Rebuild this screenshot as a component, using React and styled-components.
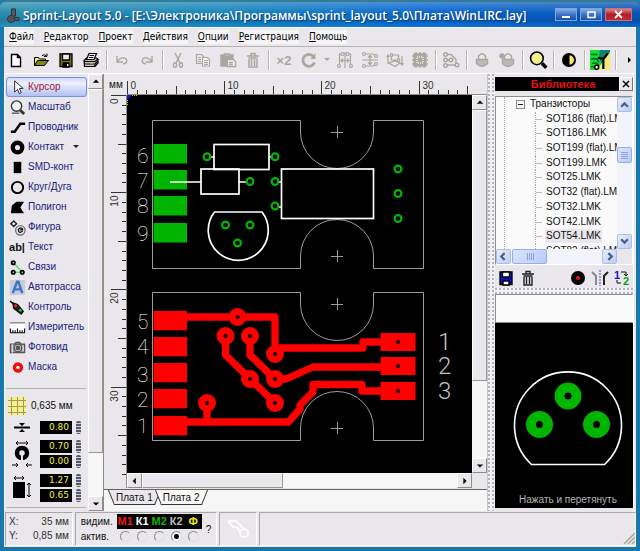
import React, { useState } from 'react';
import styled, { createGlobalStyle, css } from 'styled-components';

const face = '#e9e7ec';
const sans = '"Liberation Sans", Arial, sans-serif';
const ui = '"DejaVu Sans Condensed", "DejaVu Sans", sans-serif';
const dither = css`
  background: repeating-conic-gradient(#f1f1f4 0 25%, #fbfbfb 0 50%) 0 0 / 2px 2px;
`;
const dots = css`
  background: radial-gradient(circle at 1px 1px, #b4b4c0 1px, transparent 1px) 0 0 / 4px 4px #f1f1f5;
`;

const Global = createGlobalStyle`
  * { box-sizing: border-box; }
  body { margin: 0; background: #1b7fb0; font-family: ${sans}; font-size: 10px; color: #111; }
  button, input { font: inherit; color: inherit; margin: 0; padding: 0; }
  button { border: 0; background: none; }
  svg { display: block; flex: none; }
`;

const Window = styled.div`
  height: 100vh;
  min-height: 551px;
  display: flex;
  flex-direction: column;
  padding: 0 4px 4px;
  background: #1878ac;
  border-radius: 6px 6px 0 0;
`;

const TitleBar = styled.header`
  flex: 0 0 27px;
  margin: 0 -4px;
  padding: 3px 8px 0 6px;
  display: flex;
  align-items: center;
  gap: 3px;
  border-radius: 6px 6px 0 0;
  border-top: 2px solid #367b93;
  background: linear-gradient(#ffffff40, #ffffff00 45%, #00308030 75%, #20a0ff40),
    linear-gradient(90deg, #2b8eae, #1685bb 35%, #0868d0 65%, #0655b4);
`;

const Title = styled.h1`
  flex: 1;
  margin: 0;
  font: 600 12px/18px "Open Sans", sans-serif;
  color: #fff;
  text-shadow: 1px 1px 1px #0a3a70;
  white-space: nowrap;
`;

const WindowButtons = styled.div`
  display: flex;
  gap: 3px;
  margin-top: -3px;
`;

const WindowButton = styled.button`
  width: ${(p) => (p.$close ? 27 : 22)}px;
  height: 13px;
  display: grid;
  place-items: center;
  border: 1px solid ${(p) => (p.$close ? '#c87080' : '#7fa5dc')};
  background: ${(p) => (p.$close ? 'linear-gradient(#d58a90, #b51c24 50%, #c82a30)' : 'linear-gradient(#87aee6, #3f74c8 50%, #1c4ea8)')};
`;

const MenuBar = styled.nav`
  flex: 0 0 19px;
  display: flex;
  align-items: center;
  gap: 10px;
  padding-left: 5px;
  background: ${face};
  border-top: 1px solid #f8f8fa;
`;

const MenuItem = styled.button`
  font: 10px/14px ${ui};
  color: #000;
  background: #f5f5f7;
  white-space: nowrap;
`;

const ToolBar = styled.div`
  flex: 0 0 28px;
  display: flex;
  align-items: center;
  gap: 1px;
  background: ${face};
  border-top: 1px solid #b9b6ae;
  border-bottom: 1px solid #fff;
  color: #aaa79f;
`;

const ToolButton = styled.button`
  width: ${(p) => p.$w || 24}px;
  height: 24px;
  display: grid;
  place-items: center;
  font: bold 13px ${sans};
`;

const Divider = styled.span`
  width: 5px;
  height: 20px;
  background: linear-gradient(90deg, transparent 2px, #b9b6ae 2px 3px, #fff 3px 4px, transparent 4px);
`;

const Spacer = styled.span`
  flex: 1;
`;

const Body = styled.main`
  flex: 1;
  min-height: 0;
  display: grid;
  grid-template-columns: 84px 15px minmax(0, 1fr) 8px 139px 2px;
  background: ${face};
`;

const SidePanel = styled.section`
  display: flex;
  flex-direction: column;
  padding: 3px 0 0 1px;
  border-left: 1px solid #f8f8fa;
`;

const ToolRow = styled.button`
  height: 20px;
  display: grid;
  grid-template-columns: 20px auto 1fr;
  gap: 1px;
  align-items: center;
  justify-items: start;
  margin-right: 1px;
  border: 1px solid transparent;
  border-radius: 3px;
  color: #20207c;
  font: 10px/14px ${sans};
  white-space: nowrap;
  ${(p) => p.$on && css`
    color: #a01828;
    border-color: #7893e0;
    background: linear-gradient(#cfd8fa, #eef0fc 30%, #b3c0f6);
  `}
  > svg:first-child { justify-self: center; }
  > svg:nth-of-type(2) { justify-self: center; }
`;

const Settings = styled.div`
  margin: 11px 2px 0 0;
  border-top: 1px solid #b9b6ae;
  border-bottom: 1px solid #b9b6ae;
  height: 120px;
  flex: none;
  padding: 7px 0 0 2px;
`;

const GridStep = styled.button`
  display: flex;
  align-items: center;
  gap: 5px;
  height: 19px;
  white-space: nowrap;
`;

const Measures = styled.div`
  display: grid;
  grid-template-columns: 28px 32px 5px;
  column-gap: 4px;
  margin-top: 6px;
  align-items: center;
  justify-items: center;
`;

const Fields = styled.div`
  display: flex;
  flex-direction: column;
  gap: 2px;
`;

const NumberField = styled.input`
  width: 32px;
  height: 13px;
  border: 0;
  text-align: right;
  padding-right: 3px;
  background: #000;
  color: #f3f32c;
  font: 9px/13px "DejaVu Sans", sans-serif;
`;

const Spinner = styled.button`
  width: 5px;
  height: 13px;
  border-radius: 2px;
  background: repeating-linear-gradient(#55586a 0 2px, #d0d0da 2px 3px);
`;

const ScrollBar = styled.div`
  display: flex;
  flex-direction: ${(p) => (p.$row ? 'row' : 'column')};
  ${dither}
`;

const Arrow = styled.button`
  flex: 0 0 15px;
  min-width: 15px;
  min-height: 15px;
  display: grid;
  place-items: center;
  background: ${face};
  border: 1px solid;
  border-color: #fff #8f8d84 #8f8d84 #fff;
`;

const Thumb = styled.div`
  flex: ${(p) => p.$size} 1 0;
  background: ${face};
  border: 1px solid;
  border-color: #fff #99978e #99978e #fff;
`;

const Track = styled.div`
  flex: ${(p) => p.$size} 1 0;
`;

const Editor = styled.section`
  display: grid;
  grid-template-columns: 23px minmax(0, 1fr) 15px;
  grid-template-rows: 21px minmax(0, 1fr) 15px 23px;
  border-left: 1px solid #8f8d84;
`;

const Unit = styled.span`
  font: 10px/22px ${sans};
  padding-left: 5px;
`;

const RulerTop = styled.svg`
  width: 100%;
  height: 21px;
  grid-column: 2 / 4;
  border-bottom: 1px solid #8f8d84;
`;

const RulerLeft = styled.svg`
  width: 23px;
  height: 100%;
  min-height: 0;
  grid-row: 2 / 4;
  border-right: 1px solid #8f8d84;
`;

const Board = styled.svg`
  width: 100%;
  height: 100%;
  min-height: 0;
  background: #000;
`;

const Corner = styled.span`
  background: ${face};
`;

const Tabs = styled.div`
  grid-column: 1 / -1;
  display: flex;
  align-items: flex-start;
  padding: 1px 0 0 7px;
  margin-top: 1px;
  border-top: 1px solid #66645e;
  ${dither}
`;

const Tab = styled.button`
  position: relative;
  z-index: 0;
  height: 15px;
  padding: 0 5px;
  margin: -1px 0 0 0;
  font: 10px/14px ${sans};
  white-space: nowrap;
  &::before, &::after {
    content: '';
    position: absolute;
    z-index: -1;
    top: 0;
    bottom: 0;
    background: ${(p) => (p.$on ? face : '#fafafa')};
    border-bottom: 1px solid #333;
  }
  &::before { left: 0; right: 6px; border-left: 1px solid #333; transform: skewX(22deg); }
  &::after { left: 6px; right: 0; border-right: 1px solid #333; transform: skewX(-22deg); }
`;

const Splitter = styled.div`
  ${dots}
  border-left: 1px solid #c8c6c6;
`;

const Library = styled.aside`
  display: flex;
  flex-direction: column;
  padding-top: 3px;
  border-right: 1px solid #fff;
`;

const LibraryHead = styled.div`
  display: flex;
  height: 14px;
  background: #000;
`;

const LibraryTitle = styled.h2`
  flex: 1;
  margin: 0;
  padding-left: 12px;
  text-align: center;
  color: #e01212;
  font: bold 11px/14px ${sans};
`;

const CloseButton = styled.button`
  width: 14px;
  display: grid;
  place-items: center;
  background: ${face};
  border: 1px solid;
  border-color: #fff #777 #777 #fff;
`;

const TreeBox = styled.div`
  flex: 0 0 169px;
  margin-top: 5px;
  display: grid;
  grid-template-columns: minmax(0, 1fr) 15px;
  grid-template-rows: minmax(0, 1fr) 15px;
  background: #fafafa;
  border: 1px solid #8f8d84;
  border-right-color: #fff;
  border-bottom-color: #fff;
`;

const Tree = styled.ul`
  margin: 0 0 0 8px;
  padding: 0;
  list-style: none;
  overflow: hidden;
  display: grid;
  grid-template-rows: repeat(10, minmax(0, 1fr)) 5px;
  border-left: 1px dotted #aaa;
`;

const Group = styled.li`
  display: flex;
  align-items: center;
  gap: 5px;
  padding-left: 11px;
  font: 10px/14px ${sans};
  white-space: nowrap;
`;

const Toggle = styled.button`
  width: 9px;
  height: 9px;
  border: 1px solid #8a8a94;
  background: linear-gradient(transparent 3px, #222 3px 4px, transparent 4px) 1px 0 / 5px 7px no-repeat;
`;

const Leaf = styled.li`
  margin-left: 30px;
  padding-left: 9px;
  white-space: nowrap;
  border-left: 1px dotted #aaa;
  background: linear-gradient(#bbb, #bbb) 0 7px / 6px 1px no-repeat;
`;

const LeafName = styled.span`
  font: 10px/14px ${sans};
  display: inline-block;
  padding: 0 1px;
  background: ${(p) => (p.$on ? '#e9e7ec' : 'transparent')};
`;

const XpBar = styled.div`
  display: flex;
  flex-direction: ${(p) => (p.$row ? 'row' : 'column')};
  background: #f3f3fb;
`;

const XpArrow = styled.button`
  flex: 0 0 15px;
  min-width: 15px;
  display: grid;
  place-items: center;
  border: 1px solid #aebfe0;
  border-radius: 2px;
  background: linear-gradient(135deg, #e6edfd, #bccdf6);
`;

const XpThumb = styled.div`
  flex: 0 0 ${(p) => p.$size}px;
  display: grid;
  place-items: center;
  border: 1px solid #98aee6;
  border-radius: 2px;
  background: linear-gradient(135deg, #dbe5fd, #b9caf8);
`;

const LibraryTools = styled.div`
  flex: 0 0 23px;
  display: flex;
  align-items: center;
  gap: 2px;
  padding: 2px 1px 0;
`;

const SmallButton = styled.button`
  width: 20px;
  height: 18px;
  display: grid;
  place-items: center;
`;

const HSplitter = styled.div`
  flex: 0 0 6px;
  ${dots}
`;

const Filter = styled.input`
  flex: 0 0 29px;
  width: 100%;
  border: 1px solid;
  border-color: #8f8d84 #fff #8f8d84 #8f8d84;
  background: #fafafa;
`;

const Preview = styled.div`
  flex: 1;
  min-height: 0;
  margin-bottom: 3px;
  padding-left: 8px;
  background: #000;
  display: flex;
  flex-direction: column;
  align-items: center;
  justify-content: flex-end;
`;

const Hint = styled.p`
  margin: 27px 0 1px;
  font: 10px/14px ${sans};
  color: #b4b4b4;
  white-space: nowrap;
`;

const StatusBar = styled.footer`
  flex: 0 0 35px;
  display: flex;
  gap: 2px;
  background: ${face};
  padding: 1px 0 1px 1px;
`;

const StatusPanel = styled.div`
  flex: ${(p) => (p.$w ? `0 0 ${p.$w}px` : '1')};
  border: 1px solid;
  border-color: #a9a7a0 #fff #fff #a9a7a0;
  display: flex;
  align-items: center;
  justify-content: ${(p) => (p.$end ? 'flex-end' : 'center')};
  gap: 4px;
`;

const Coords = styled.dl`
  flex: 1;
  margin: 0;
  padding: 0 3px;
  display: grid;
  grid-template-columns: auto 1fr;
  line-height: 14px;
  color: #333;
  dt, dd { margin: 0; }
  dd { text-align: right; }
`;

const Layers = styled.fieldset`
  border: 0;
  margin: 0;
  padding: 0;
  display: grid;
  grid-template-columns: 36px repeat(5, 17px);
  grid-template-rows: 15px 15px;
  align-items: center;
  font: 10px/14px ${sans};
`;

const LayerName = styled.label`
  height: 15px;
  text-align: center;
  background: #000;
  color: ${(p) => p.$c};
  font: bold 11px/15px ${sans};
`;

const Radio = styled.input`
  appearance: none;
  width: 11px;
  height: 11px;
  margin: 0;
  justify-self: center;
  border-radius: 50%;
  border: 1px solid #8d8b86;
  border-right-color: #dedee2;
  border-bottom-color: #dedee2;
  background: ${face};
  &:checked { background: radial-gradient(circle, #000 2px, #f6f6f6 3px); }
`;

const Tri = ({ d = 'up' }) => {
  const pts = { up: '0,5 4,1 8,5', down: '0,2 8,2 4,6', left: '5,0 1,4 5,8', right: '2,0 6,4 2,8' };
  return <svg width="8" height="8" viewBox="-1 -1 10 10"><polygon points={pts[d]} fill="#000" /></svg>;
};

const Chevron = ({ d }) => {
  const p = { up: 'M1 6 4 3 7 6', down: 'M1 2 4 5 7 2', left: 'M5 1 2 4 5 7', right: 'M3 1 6 4 3 7' };
  return <svg width="9" height="9" viewBox="0 0 8 8"><path d={p[d]} fill="none" stroke="#4d6185" strokeWidth="2" /></svg>;
};

const Grip = ({ turn }) => (
  <svg width="8" height="8" shapeRendering="crispEdges"><path d={turn ? 'M1 0V7M3 0V7M5 0V7M7 0V7' : 'M0 1H7M0 3H7M0 5H7M0 7H7'} stroke="#8ca2dc" /></svg>
);

const Icon = ({ size = 18, children, ...rest }) => (
  <svg width={size} height={size} viewBox="0 0 18 18" fill="none" stroke="currentColor" strokeWidth="1.4" {...rest}>{children}</svg>
);

const dot = (x, y, r = 1.5, f = face) => <circle key={`${x}-${y}`} cx={x} cy={y} r={r} fill={f} />;

const icons = {
  new: <Icon stroke="#000"><path d="M4.500 3.500h6l3 3v9h-9zM10.500 3.500v3h3" fill="#fff" /></Icon>,
  open: <Icon stroke="#000" strokeWidth="1"><path d="M2.500 14.500v-8h4l1 1.500h6v2" fill="#f1e668" /><path d="M2.500 14.500l3-5h11l-4 5z" fill="#858516" /><path d="M10 4.500q3-2 5 1m0-3v3h-3" /></Icon>,
  save: <Icon stroke="#000" strokeWidth="1.300"><path d="M3 3h12v12.500H3z" fill="#77770d" /><path d="M5.500 3h7v6h-7z" fill="#eceaf0" /><path d="M6 12h6v4H6z" fill="#000" /><path d="M10.700 13v2" stroke="#fff" /></Icon>,
  print: <Icon stroke="#000" strokeWidth="1.200"><path d="M2 9.500 4.500 7h10l1.500 1v4l-3 3.500H2.500z" fill="#c4c4c8" /><path d="M4.500 8.500 7 2.500h7.500l-2.500 6z" fill="#fff" /><path d="M7.500 4.500h4.500M6.800 6.500h4.500M2 10.500h11l3-2.500M2.500 13h10.500v2M13 13l3-3" /><path d="M8 12h3" stroke="#d8c820" /></Icon>,
  undo: <Icon><path d="M4 5v6h6M4 11q3-5 8-4 3 2 1 5l-3 1" /></Icon>,
  redo: <Icon><path d="M14 5v6H8M14 11q-3-5-8-4-3 2-1 5l3 1" /></Icon>,
  cut: <Icon><path d="M6 2l5 10M12 2 7 12" /><ellipse cx="6" cy="14" rx="1.600" ry="2.300" /><ellipse cx="12" cy="14" rx="1.600" ry="2.300" /></Icon>,
  copy: <Icon strokeWidth="1.200"><path d="M2.500 3.500h5l2 2v7h-7zM4 6.500h3M4 8.500h3M4 10.500h3" /><path d="M8.500 6.500h5l2 2v6.500h-7z" fill="#f4f3f6" /><path d="M10 9.500h4M10 11.500h4M10 13.300h4" /></Icon>,
  paste: <Icon><path d="M2 4h12v11H2z" fill="currentColor" /><path d="M5.500 3h5v2h-5z" fill="#eee" /><path d="M8.500 8.500h6l2 2v5h-8z" fill="#f4f3f6" /><path d="M10 11.500h4M10 13.500h4" /></Icon>,
  trash: <Icon strokeWidth="1.500"><path d="M3 5h12M7 4.500V2.500h4v2M4.500 7h9M5 8v8h8V8M7.500 8v7M10.500 8v7" /></Icon>,
  rotate: <Icon strokeWidth="2.800"><path d="M14.500 11.500a6 6 0 1 1-1-6" /><path d="M15.500 2v6h-5z" fill="currentColor" stroke="none" /></Icon>,
  mirrorH: <Icon strokeWidth="1.200"><path d="M9 1v16M6.500 3H3.500v12M14.500 15V3h-3M5 9.500h8M7 7.500l-2 2 2 2M11 7.500l2 2-2 2" />{[[3, 15], [6.500, 3], [15, 15], [11.500, 3]].map(([x, y]) => dot(x, y))}</Icon>,
  mirrorV: <Icon strokeWidth="1.200"><path d="M1 9h16M4 3h8l3 2M4 15h8l3-2M9 5v8M7 6.500l2-2 2 2M7 11.500l2 2 2-2" />{[[3, 3], [15, 5], [3, 15], [15, 13]].map(([x, y]) => dot(x, y))}</Icon>,
  snap: <Icon strokeWidth="1.200"><path d="M5.500 4h7v5h-7zM2 13V4M.5 6 2 4l1.500 2M16 5v9M14.500 12l1.500 2 1.500-2M3 12l6 3.500 5-3.500-5-2z" />{[[5.500, 4], [12.500, 9]].map(([x, y]) => dot(x, y, 1.300))}</Icon>,
  chip: <Icon><path d="M3 3h12v12H3z" fill="currentColor" /><path d="M1 5h16M1 9h16M1 13h16M5 1v16M9 1v16M13 1v16" strokeDasharray="2 1" /><path d="M6 6h6v6H6z" stroke="#f2f1f5" strokeDasharray="1 1" /></Icon>,
  nodes: <Icon><path d="M4 3.500h5l5 5v5.500H4M4 9h5" />{[[3.500, 3.500], [3.500, 9], [3.500, 14.500], [15, 14], [9, 9]].map(([x, y]) => dot(x, y, 1.800))}</Icon>,
  lock: <Icon><path d="M5.500 8V5q3.500-4.500 7 0v3" /><path d="M3.500 8.500h11v4q-5.500 6-11 0z" fill="#f0eff3" /><path d="M4 10h10M4 12h10M6 14h6" /></Icon>,
  lockAdd: <Icon><path d="M6.500 8V5q3.500-4.500 7 0v3" /><path d="M4.500 8.500h11v4q-5.500 6-11 0z" fill="#f0eff3" /><path d="M5 10h10M5 12h10M7 14h6M4 2v6M1 5h6M2 3l4 4M6 3 2 7" /></Icon>,
  search: <Icon size={20} stroke="#000"><circle cx="8" cy="7.500" r="5.700" fill="#f6f08a" /><path d="m12.500 12 4 4" strokeWidth="3.200" /></Icon>,
  contrast: <Icon stroke="none"><circle cx="9" cy="9" r="7" fill="#000" /><path d="M9.500 4.500a4.500 4.500 0 0 1 0 9zM10 4l4.500 5-4.500 5z" fill="#f3e77c" /></Icon>,
  board: <Icon size={20} stroke="none"><path d="M0 0h18v18H0z" fill="#0c8079" /><path d="M0 0h9l-1 7 2 4-1 7H0z" fill="#19dc32" /><path d="M1 4h6M1 8h5l2 3M2 12h4l2 2M1 15h4" stroke="#056d2a" /><path d="M18 2v16H6z" fill="#f4eb78" /><path d="m16 3-4 5-5-1M12 8v9" stroke="#000" strokeWidth="2" /><circle cx="6" cy="15.500" r="1.800" fill="#fff" stroke="#000" /></Icon>,
};

const toolIcons = {
  cursor: <Icon stroke="#222" strokeWidth="1"><path d="M6 2v12l3-3 2 4.500 2-1L11 10h4z" fill="#fff" /></Icon>,
  zoom: <Icon stroke="#333"><circle cx="8" cy="7.500" r="5.500" fill="#eef3f5" /><path d="m12 12 4 4" strokeWidth="3" /><path d="M5 6l2-2" stroke="#fff" /><path d="M3 15h8" stroke="#555" /></Icon>,
  track: <Icon stroke="#000" strokeWidth="2.600"><path d="M2 13.500h4L12 5h5" /></Icon>,
  pad: <Icon stroke="#000" strokeWidth="4.600"><circle cx="9" cy="9" r="5" /></Icon>,
  smd: <Icon stroke="none"><path d="M5 3h8v12H5z" fill="#000" /></Icon>,
  circle: <Icon stroke="#000" strokeWidth="2"><circle cx="9" cy="9" r="6" /></Icon>,
  polygon: <Icon stroke="none"><path d="M2 15 3 7l5-4h8l-4 6 4 6z" fill="#000" /></Icon>,
  shape: <Icon stroke="#222" strokeWidth="1.500"><path d="m5 2 3 3-3 3-3-3z" /><circle cx="12" cy="12" r="5" stroke="#777" /><path d="M12 12q2-3 2 1-4 3-4-2 2-3 5 0" /></Icon>,
  links: <Icon stroke="#000" strokeWidth="2"><path d="M5 4l9 10H5" stroke="#31dc43" strokeWidth="1.200" /><circle cx="4.500" cy="4" r="1.700" fill="#fff" /><circle cx="4.500" cy="14" r="1.700" fill="#fff" /><circle cx="14" cy="14" r="1.700" fill="#fff" /></Icon>,
  auto: <Icon><path d="M1 1h16v16H1z" fill="#c9ccd0" stroke="none" /><path d="m4 15 4.500-12h1.500L14 15M6 11h7" stroke="#3c74d8" strokeWidth="2.600" /></Icon>,
  test: <Icon><path d="M1 2 15 14" stroke="#000" /><path d="m4 4 5 2 6 7-2 3-8-6z" fill="#222" stroke="#111" /><path d="m6 6 2 2" stroke="#f22" strokeWidth="2.500" /><path d="m11 11 2 2" stroke="#1c3" strokeWidth="2.500" /></Icon>,
  measure: <Icon><path d="M1 5h16v9H1z" fill="#fff" stroke="none" /><path d="M1 4h16" stroke="#888" /><path d="M1.500 10v4M4 12v2M6.500 12v2M9 10v4M11.500 12v2M14 12v2M16.500 10v4M1 14.500h16" stroke="#111" strokeWidth="1.200" /></Icon>,
  photo: <Icon stroke="#555"><path d="M1.500 5.500h4l2-2h4l1 2h4v9h-15z" fill="#98969a" /><circle cx="9.500" cy="9.500" r="4" fill="#cfc9bd" /><circle cx="9.500" cy="9.500" r="1.800" fill="#556" /><path d="M3.500 5.500v9M15 7v6" stroke="#ddd" /></Icon>,
  mask: <Icon stroke="#f50c0c" strokeWidth="3.600"><circle cx="9.500" cy="9" r="3.700" fill="#fff" /></Icon>,
};

const tools = [
  ['cursor', 'Курсор'], ['zoom', 'Масштаб'], ['track', 'Проводник'], ['pad', 'Контакт'], ['smd', 'SMD-конт'],
  ['circle', 'Круг/Дуга'], ['polygon', 'Полигон'], ['shape', 'Фигура'], ['text', 'Текст'], ['links', 'Связи'],
  ['auto', 'Автотрасса'], ['test', 'Контроль'], ['measure', 'Измеритель'], ['photo', 'Фотовид'], ['mask', 'Маска'],
];

const Glyph = styled.span`
  justify-self: center;
  font: bold 11px/14px ${sans};
  color: #111;
`;

const toolbar = ['new', 'open', 'save', 'print', '|', 'undo', 'redo', '|', 'cut', 'copy', 'paste', 'trash', '|', 'x2', 'rotate', 'more',
  'mirrorH', 'mirrorV', 'snap', 'chip', '|', 'nodes', '|', 'lock', 'lockAdd', '|', 'search', '|', 'contrast', '|', 'board', '|'];

const menus = ['Файл', 'Редактор', 'Проект', 'Действия', 'Опции', 'Регистрация', 'Помощь'];
const parts = ['SOT186 (flat).LMK', 'SOT186.LMK', 'SOT199 (flat).LMK', 'SOT199.LMK', 'SOT25.LMK', 'SOT32 (flat).LMK', 'SOT32.LMK', 'SOT42.LMK', 'SOT54.LMK', 'SOT82 (flat).LMK'];
const layers = [['М1', '#f01818'], ['К1', '#fff'], ['М2', '#14b014'], ['К2', '#bdbdbd'], ['Ф', '#f0e818']];

const STEP = 9.72;
const tick = (i) => Math.round(i * STEP) + 0.5;

function HorizontalRuler() {
  return (
    <RulerTop fontFamily="Liberation Sans" fontSize="10" fill="#333">
      {Array.from({ length: 36 }, (_, i) => (
        <React.Fragment key={i}>
          <path d={`M${tick(i)} ${i % 10 === 0 ? 7 : i % 5 === 0 ? 12 : 16}V20`} stroke="#333" />
          {i % 10 === 0 && <text x={tick(i) + 3} y="15">{i}</text>}
        </React.Fragment>
      ))}
    </RulerTop>
  );
}

function VerticalRuler() {
  return (
    <RulerLeft fontFamily="Liberation Sans" fontSize="10" fill="#333">
      {Array.from({ length: 40 }, (_, i) => (
        <React.Fragment key={i}>
          <path d={`M${i % 10 === 0 ? 7 : i % 5 === 0 ? 14 : 18} ${tick(i)}H22`} stroke="#333" />
          {i % 10 === 0 && <text transform={`translate(14 ${tick(i) + 3}) rotate(-90)`} textAnchor="end">{i}</text>}
        </React.Fragment>
      ))}
    </RulerLeft>
  );
}

const outline = 'M152.500 120.500H300.500V132A36.500 36.500 0 0 0 373.500 132V120.500H423.500V268.500H373.500V256A36.500 36.500 0 0 0 300.500 256V268.500H152.500ZM331 132.500h12M337.500 126v12M331 256.500h12M337.500 250v12';
const holes = [[207, 156.700], [275, 156.700], [250, 181.500], [275, 181.500], [275, 206], [225.500, 225], [250, 225], [237.500, 243], [398, 169], [398, 193.500], [398, 218.500]];
const redPads = [[237.500, 317], [225.500, 336], [250, 336], [275, 354], [250, 379], [275, 379], [275, 403], [207, 403]];
const greenRows = [[144, '6', 163], [170, '7', 188], [196, '8', 213], [223, '9', 241]];
const redRows = [[311, '5', 329], [337, '4', 354], [363, '3', 382], [389, '2', 407], [416, '1', 433]];
const exits = [[333, '1', 350], [357, '2', 374], [382, '3', 399]];

function Circuit() {
  return (
    <Board fill="none">
      <path d="M0 0h5L0 5z" fill="#0018f0" />
      <path d="M5 .5h6M.5 5v6" stroke="#c8c820" strokeDasharray="1 1" />
      <g transform="translate(-127 -95)" fontFamily="Roboto" fontWeight="100" fontSize="21">
        <path d={outline} stroke="#9c9c9c" />
        <path d={outline} stroke="#9c9c9c" transform="translate(0 172)" />
        {greenRows.map(([y, n, b]) => (
          <g key={n}><rect x="153.500" y={y} width="33.500" height="19.500" fill="#00b400" /><text x="137" y={b} fill="#fff">{n}</text></g>
        ))}
        <g stroke="#fff" strokeWidth="1.700">
          <path d="M170 182h31M239 182h8M209 157h5M269 157h4M277 182h4M277 207h4" />
          <rect x="214" y="144.500" width="55" height="25" />
          <rect x="201" y="169" width="38" height="25" />
          <rect x="281.500" y="169" width="92" height="49.500" />
          <path d="M214.500 212H262A30 30 0 1 1 214.500 212Z" />
        </g>
        <g stroke="#00b400" strokeWidth="2.200">
          {holes.map(([x, y]) => <circle key={`${x}${y}`} cx={x} cy={y} r="3.400" />)}
        </g>
        <g stroke="#fe0000" strokeWidth="7.300" strokeLinejoin="round">
          <path d="M187 317H275V348H363V342H382M225.500 336V355L275 403M250 336V355L275 379H286L313 367H382M187 422H288.500L300 409V405L313 392V384.500H362V391H382M207 403V422" />
        </g>
        {redRows.map(([y, n, b]) => (
          <g key={n}><rect x="153.500" y={y} width="33.500" height="19.300" fill="#fe0000" /><text x="137" y={b} fill="#fff">{n}</text></g>
        ))}
        {redPads.map(([x, y]) => <circle key={`${x}${y}`} cx={x} cy={y} r="5.500" stroke="#fe0000" strokeWidth="7" fill="#000" />)}
        {exits.map(([y, n, b]) => (
          <g key={n}>
            <rect x="380.500" y={y} width="35" height="18" fill="#fe0000" />
            <circle cx="398" cy={y + 9} r="2" fill="#000" />
            <text x="438" y={b} fontSize="24" fontWeight="300" fill="#c4c4c4">{n}</text>
          </g>
        ))}
      </g>
    </Board>
  );
}

function Sidebar() {
  const [active, setActive] = useState('cursor');
  return (
    <SidePanel aria-label="Инструменты">
      {tools.map(([id, name]) => (
        <ToolRow key={id} $on={active === id} onClick={() => setActive(id)}>
          {toolIcons[id] ? React.cloneElement(toolIcons[id], { size: 17 }) : <Glyph>ab|</Glyph>}
          <span>{name}</span>
          {id === 'pad' && <svg width="6" height="4"><path d="M0 0h6L3 3z" fill="#222" /></svg>}
        </ToolRow>
      ))}
      <Settings>
        <GridStep>
          <svg width="18" height="18"><path d="M0 0h18v18H0z" fill="#f6f08a" /><path d="M3.500 0v18M9.500 0v18M15.500 0v18M0 3.500h18M0 9.500h18M0 15.500h18" stroke="#a09a58" /></svg>
          0,635 мм
        </GridStep>
        <Measures>
          <svg width="18" height="13" fill="#000"><path d="M1 5.500h16v2H1zM6 2h6L9 5zM6 11h6L9 8z" /></svg>
          <NumberField aria-label="Ширина проводника" defaultValue="0.80" />
          <Spinner aria-label="Изменить ширину" />
        </Measures>
        <Measures>
          <svg width="20" height="28"><path d="M4 3h12M6 1 4 3l2 2M14 1l2 2-2 2" stroke="#000" fill="none" /><circle cx="10" cy="13" r="5" fill="none" stroke="#000" strokeWidth="4.500" /><path d="M10 13v12" stroke={face} strokeWidth="2" /><path d="M0 25h6M4 23l2 2-2 2M20 25h-6M16 23l-2 2 2 2" stroke="#000" fill="none" /></svg>
          <Fields>
            <NumberField aria-label="Диаметр контакта" defaultValue="0.70" />
            <NumberField aria-label="Диаметр отверстия" defaultValue="0.00" />
          </Fields>
          <Fields><Spinner aria-label="Изменить контакт" /><Spinner aria-label="Изменить отверстие" /></Fields>
        </Measures>
        <Measures>
          <svg width="20" height="26"><path d="M2 3h10M4 1 2 3l2 2M10 1l2 2-2 2M17 8v14M15 10l2-2 2 2M15 20l2 2 2-2" stroke="#000" fill="none" /><path d="M1 7h12v16H1z" /></svg>
          <Fields>
            <NumberField aria-label="Ширина SMD" defaultValue="1.27" />
            <NumberField aria-label="Высота SMD" defaultValue="0.65" />
          </Fields>
          <Fields><Spinner aria-label="Изменить ширину SMD" /><Spinner aria-label="Изменить высоту SMD" /></Fields>
        </Measures>
      </Settings>
    </SidePanel>
  );
}

function LibraryPanel() {
  return (
    <Library>
      <LibraryHead>
        <LibraryTitle>Библиотека</LibraryTitle>
        <CloseButton aria-label="Закрыть"><svg width="8" height="8"><path d="M1 1l6 6M7 1 1 7" stroke="#000" strokeWidth="1.500" /></svg></CloseButton>
      </LibraryHead>
      <TreeBox>
        <Tree>
          <Group><Toggle aria-label="Свернуть" />Транзисторы</Group>
          {parts.map((p) => <Leaf key={p}><LeafName $on={p === 'SOT54.LMK'}>{p}</LeafName></Leaf>)}
        </Tree>
        <XpBar>
          <XpArrow aria-label="Вверх"><Chevron d="up" /></XpArrow>
          <Track $size={35} />
          <XpThumb $size={16}><Grip /></XpThumb>
          <Track $size={70} />
          <XpArrow aria-label="Вниз"><Chevron d="down" /></XpArrow>
        </XpBar>
        <XpBar $row>
          <XpArrow aria-label="Влево"><Chevron d="left" /></XpArrow>
          <Track $size={1} />
          <XpThumb $size={35}><Grip turn /></XpThumb>
          <Track $size={54} />
          <XpArrow aria-label="Вправо"><Chevron d="right" /></XpArrow>
        </XpBar>
        <Corner />
      </TreeBox>
      <LibraryTools>
        <SmallButton aria-label="Сохранить"><Icon stroke="#000"><path d="M3 3h12v12.500H3z" fill="#1010c0" /><path d="M5.500 3h7v5h-7z" fill="#fff" /><path d="M6 12h6v4H6z" fill="#fff" /></Icon></SmallButton>
        <SmallButton aria-label="Удалить"><Icon stroke="#222"><path d="M3 5h12M7 4.500V2.500h4v2M4.500 7h9M5 8v8h8V8M7.500 8v7M10.500 8v7" /></Icon></SmallButton>
        <Spacer />
        <SmallButton aria-label="Сторона"><Icon stroke="none"><circle cx="9" cy="9" r="7" fill="#000" /><circle cx="9" cy="9" r="2" fill="#f01010" /></Icon></SmallButton>
        <SmallButton aria-label="Отразить"><Icon stroke="#222" strokeWidth="2"><path d="M1 3l4 4v9" stroke="#889" /><path d="M17 3l-4 4v9" /><path d="M9 1v16" stroke="#3a4ae0" strokeWidth="1" strokeDasharray="2 1" /></Icon></SmallButton>
        <SmallButton aria-label="Нумерация"><svg width="16" height="18" fontFamily="Liberation Sans" fontWeight="bold" fontSize="11"><text x="0" y="10" fill="#1414d0">1</text><text x="9" y="16" fill="#0a9c28">2</text><path d="M7 3h5v4M10 5l2 2 2-2M7 14H3v-3" stroke="#111" fill="none" /></svg></SmallButton>
      </LibraryTools>
      <HSplitter />
      <Filter aria-label="Описание" />
      <Preview>
        <svg width="110" height="96">
          <path d="M18.500 94.500A53.500 53.500 0 1 1 91.500 94.500Z" fill="none" stroke="#fff" strokeWidth="1.600" />
          <g fill="#000" stroke="#00b400" strokeWidth="10"><circle cx="55" cy="26" r="8.500" /><circle cx="26.500" cy="54.500" r="8.500" /><circle cx="83.500" cy="54.500" r="8.500" /></g>
        </svg>
        <Hint>Нажать и перетянуть</Hint>
      </Preview>
    </Library>
  );
}

export default function App() {
  const [layer, setLayer] = useState(3);
  const [sheet, setSheet] = useState(0);
  return (
    <>
      <Global />
      <Window>
        <TitleBar>
          <svg width="14" height="16" fill="#555b60" stroke="#333" strokeWidth="1"><path d="M5.500 1h4v7h-4zM8 9.500h5v3H8z" /><circle cx="5" cy="11" r="3.500" /><circle cx="5" cy="11" r="1" fill="#bbb" /></svg>
          <Title>Sprint-Layout 5.0 - [E:\Электроника\Программы\sprint_layout_5.0\Плата\WinLIRC.lay]</Title>
          <WindowButtons>
            <WindowButton aria-label="Свернуть"><svg width="10" height="9"><path d="M1 7h8" stroke="#fff" strokeWidth="2" /></svg></WindowButton>
            <WindowButton aria-label="Развернуть"><svg width="9" height="9"><path d="M1 2h7v5.500H1z" stroke="#fff" strokeWidth="1.500" fill="none" /></svg></WindowButton>
            <WindowButton $close aria-label="Закрыть"><svg width="9" height="9"><path d="M1 1l7 7M8 1 1 8" stroke="#fff" strokeWidth="1.800" /></svg></WindowButton>
          </WindowButtons>
        </TitleBar>
        <MenuBar>
          {menus.map((m) => <MenuItem key={m}><u>{m[0]}</u>{m.slice(1)}</MenuItem>)}
        </MenuBar>
        <ToolBar>
          {toolbar.map((t, i) => {
            if (t === '|') return <Divider key={i} />;
            if (t === 'more') return <ToolButton key={i} $w={10} aria-label="Угол"><svg width="6" height="4"><path d="M0 0h6L3 3z" fill="#aaa79f" /></svg></ToolButton>;
            return <ToolButton key={i} aria-label={t}>{t === 'x2' ? '×2' : icons[t]}</ToolButton>;
          })}
          <Spacer />
          <ToolButton $w={12} aria-label="Ещё"><svg width="4" height="6"><path d="M0 0v6l3-3z" fill="#000" /></svg></ToolButton>
        </ToolBar>
        <Body>
          <Sidebar />
          <ScrollBar>
            <Arrow aria-label="Вверх"><Tri d="up" /></Arrow>
            <Thumb $size={363} />
            <Track $size={43} />
            <Arrow aria-label="Вниз"><Tri d="down" /></Arrow>
          </ScrollBar>
          <Editor>
            <Unit>мм</Unit>
            <HorizontalRuler />
            <VerticalRuler />
            <Circuit />
            <ScrollBar>
              <Arrow aria-label="Вверх"><Tri d="up" /></Arrow>
              <Thumb $size={272} />
              <Track $size={78} />
              <Arrow aria-label="Вниз"><Tri d="down" /></Arrow>
            </ScrollBar>
            <ScrollBar $row>
              <Arrow aria-label="Влево"><Tri d="left" /></Arrow>
              <Thumb $size={140} />
              <Track $size={176} />
              <Arrow aria-label="Вправо"><Tri d="right" /></Arrow>
            </ScrollBar>
            <Corner />
            <Tabs>
              {['Плата 1', 'Плата 2'].map((t, i) => <Tab key={t} $on={sheet === i} onClick={() => setSheet(i)}>{t}</Tab>)}
            </Tabs>
          </Editor>
          <Splitter />
          <LibraryPanel />
        </Body>
        <StatusBar>
          <StatusPanel $w={68}>
            <Coords><dt>X:</dt><dd>35 мм</dd><dt>Y:</dt><dd>0,85 мм</dd></Coords>
          </StatusPanel>
          <StatusPanel $w={142}>
            <Layers>
              <span>видим.</span>
              {layers.map(([n, c], i) => <LayerName key={n} $c={c} htmlFor={`layer-${i}`}>{n}</LayerName>)}
              <span>актив.</span>
              {layers.map(([n], i) => <Radio key={n} type="radio" name="layer" id={`layer-${i}`} checked={layer === i} onChange={() => setLayer(i)} />)}
            </Layers>
            <button>?</button>
          </StatusPanel>
          <StatusPanel $w={38}>
            <svg width="24" height="22" fill="none" stroke="#fbfbfd" strokeWidth="2"><path d="M2 3h8l7 7M2 3l5 6h3l5 5" /><circle cx="18" cy="15" r="4" /></svg>
          </StatusPanel>
          <StatusPanel $end>
            <svg width="12" height="32"><path d="M1 31 12 20M5 31l7-7M9 31l3-3" stroke="#a9a7a0" strokeWidth="1.500" /></svg>
          </StatusPanel>
        </StatusBar>
      </Window>
    </>
  );
}
